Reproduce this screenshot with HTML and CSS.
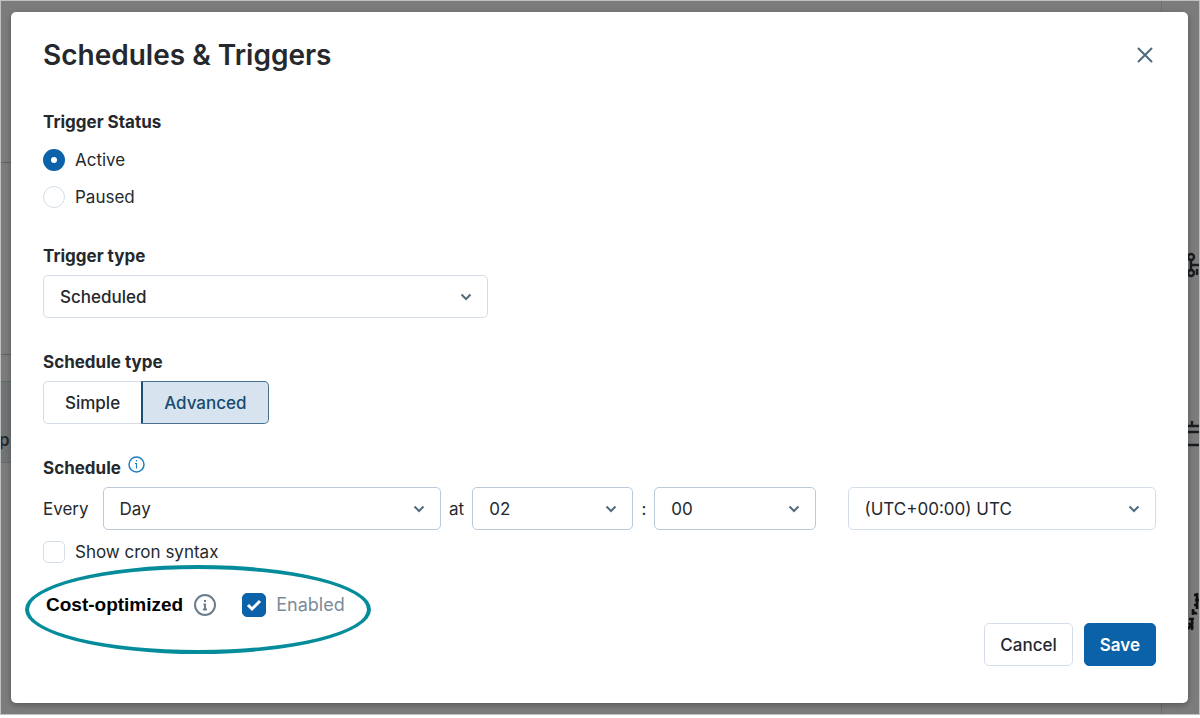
FILE: index.html
```html
<!DOCTYPE html>
<html lang="en">
<head>
<meta charset="utf-8">
<meta name="viewport" content="width=device-width, initial-scale=1">
<title>Schedules &amp; Triggers</title>
<link rel="stylesheet" href="styles.css">
</head>
<body>
<div class="backdrop">
  <div class="page-lines" aria-hidden="true">
    <span class="line line-top"></span>
    <span class="line line-mid"></span>
    <span class="line line-band"></span>
    <span class="column column-top"></span>
    <span class="column column-bottom"></span>
    <span class="page-letter">p</span>
    <svg class="glyph glyph-branch" width="12" height="28" viewBox="0 0 12 28" fill="none" stroke="#161c20" stroke-width="2.400"><circle cx="4" cy="5" r="3"/><circle cx="4" cy="21" r="3"/><path d="M4 8v10M4 13h8M10 17v6"/></svg>
    <svg class="glyph glyph-bars" width="12" height="28" viewBox="0 0 12 28" fill="none" stroke="#161c20" stroke-width="2.400"><path d="M1 6h11M1 12h11M1 25h11M5 1v5"/></svg>
    <svg class="glyph glyph-marks" width="12" height="40" viewBox="0 0 12 40" fill="none" stroke="#111" stroke-width="2.600"><path d="M10 1v16M7 3h4M8 8h4M7 13h4M5 19l5 3M6 17v6M2 27h5M2 31l4 5M6 30l-5 7M5 27v11"/></svg>
  </div>

  <form class="dialog" role="dialog" aria-labelledby="dialog-title">
    <header class="dialog-header">
      <h1 class="dialog-title" id="dialog-title">Schedules &amp; Triggers</h1>
      <button class="close" type="button" aria-label="Close">
        <svg width="18" height="18" viewBox="0 0 18 18" fill="none" stroke="#4f697a" stroke-width="2" stroke-linecap="round"><path d="M2.500 2.500l13 13M15.500 2.500l-13 13"/></svg>
      </button>
    </header>

    <fieldset class="section status">
      <legend class="label">Trigger Status</legend>
      <label class="choice"><input class="radio" type="radio" name="status" checked>Active</label>
      <label class="choice"><input class="radio" type="radio" name="status">Paused</label>
    </fieldset>

    <div class="section">
      <label class="label" for="trigger-type">Trigger type</label>
      <div class="select select-type">
        <select id="trigger-type"><option>Scheduled</option></select>
        <svg class="chevron" width="12" height="8" viewBox="0 0 12 8"><path d="M1.500 1.500l4.500 4.500 4.500-4.500"/></svg>
      </div>
    </div>

    <div class="section">
      <span class="label" id="schedule-type">Schedule type</span>
      <div class="segmented" role="group" aria-labelledby="schedule-type">
        <button class="segment" type="button" aria-pressed="false">Simple</button>
        <button class="segment segment-on" type="button" aria-pressed="true">Advanced</button>
      </div>
    </div>

    <div class="section">
      <div class="label label-info">Schedule
        <svg width="17" height="17" viewBox="0 0 17 17" fill="none" stroke="#2080c4" stroke-width="1.500"><circle cx="8.500" cy="8.500" r="7.500"/><path d="M7 7.500h1.500v5M8.500 4v1.500" stroke-width="1.200"/></svg>
      </div>
      <div class="schedule">
        <label class="every" for="every">Every</label>
        <div class="select select-strong">
          <select id="every"><option>Day</option></select>
          <svg class="chevron" width="12" height="8" viewBox="0 0 12 8"><path d="M1.500 1.500l4.500 4.500 4.500-4.500"/></svg>
        </div>
        <label for="hour">at</label>
        <div class="select select-strong">
          <select id="hour"><option>02</option></select>
          <svg class="chevron" width="12" height="8" viewBox="0 0 12 8"><path d="M1.500 1.500l4.500 4.500 4.500-4.500"/></svg>
        </div>
        <label for="minute">:</label>
        <div class="select select-strong">
          <select id="minute"><option>00</option></select>
          <svg class="chevron" width="12" height="8" viewBox="0 0 12 8"><path d="M1.500 1.500l4.500 4.500 4.500-4.500"/></svg>
        </div>
        <div class="select select-zone">
          <select aria-label="Time zone"><option>(UTC+00:00) UTC</option></select>
          <svg class="chevron" width="12" height="8" viewBox="0 0 12 8"><path d="M1.500 1.500l4.500 4.500 4.500-4.500"/></svg>
        </div>
      </div>
      <label class="choice choice-cron"><span class="tick"><input class="checkbox" type="checkbox"></span>Show cron syntax</label>
    </div>

    <div class="cost">
      <span class="cost-label" id="cost-label">Cost-optimized</span>
      <svg class="cost-info" width="24" height="24" viewBox="0 0 24 24" fill="none" stroke="#6b7e8c" stroke-width="2"><circle cx="12" cy="12" r="10"/><path d="M12 7v2M10.500 11.500H12V17M10 16.500h4"/></svg>
      <label class="choice choice-cost">
        <span class="tick">
          <input class="checkbox" type="checkbox" checked aria-describedby="cost-label">
          <svg class="check" width="16" height="14" viewBox="0 0 16 14" fill="none" stroke="#fff" stroke-width="3"><path d="M2 7l4 4 8-8"/></svg>
        </span>Enabled</label>
      <span class="ring" aria-hidden="true"></span>
    </div>

    <footer class="actions">
      <button class="button" type="button">Cancel</button>
      <button class="button button-primary" type="submit">Save</button>
    </footer>
  </form>
</div>
</body>
</html>
```
FILE: styles.css
```css
*,
*::before,
*::after {
  box-sizing: border-box;
}

body {
  margin: 0;
  background: #fff;
  color: #25292d;
  font: 400 17px/24px Inter, "Liberation Sans", sans-serif;
}

.backdrop {
  position: relative;
  overflow: hidden;
  margin-bottom: 3px;
  padding: 11px 11px 11px 10px;
  border: 1px solid #bfc1c1;
  background: #7c7c7c;
}

/* Parts of the page behind the dialog */
.line,
.column,
.page-letter,
.glyph {
  position: absolute;
}

.line {
  left: 0;
  width: 12px;
  height: 1px;
  background: #59646b;
}

.line-top { top: 161px; }
.line-mid { top: 353px; }

.line-band {
  top: 380px;
  height: 82px;
  background: #707474;
  border: solid #636c71;
  border-width: 1px 0;
}

.column {
  right: 37px;
  width: 1px;
  height: 12px;
  background: #687073;
}

.column-top { top: 0; }
.column-bottom { bottom: 0; }

.page-letter {
  top: 427px;
  left: -2px;
  color: #24292c;
  font-weight: 600;
}

.glyph { right: 0; }
.glyph-branch { top: 251px; }
.glyph-bars { top: 419px; }
.glyph-marks { top: 591px; }

.dialog {
  position: relative;
  padding: 26px 32px 37px;
  border-radius: 5px;
  background: #fff;
  box-shadow: 0 2px 6px rgba(0, 0, 0, 0.3);
}

.dialog-header {
  display: flex;
  align-items: center;
  justify-content: space-between;
  margin-bottom: 38px;
}

.dialog-title {
  margin: 0;
  font-size: 28px;
  font-weight: 600;
  line-height: 34px;
}

.close {
  display: flex;
  padding: 2px;
  border: 0;
  background: none;
}

.section {
  margin: 0 0 32px;
  padding: 0;
  border: 0;
}

.label {
  display: block;
  margin-bottom: 7px;
  padding: 0;
  font-weight: 700;
}

.status {
  margin-bottom: 35px;
}

.status .label {
  margin-bottom: 14px;
}

.label-info {
  display: flex;
  gap: 7px;
}

.choice {
  display: flex;
  align-items: center;
  gap: 10px;
}

.choice + .choice {
  margin-top: 13px;
}

.radio,
.checkbox {
  appearance: none;
  width: 22px;
  height: 22px;
  margin: 0;
  border: 1px solid #d5dde6;
  background: #fff;
}

.radio {
  border-radius: 50%;
}

.radio:checked {
  border: 8px solid #0b62a9;
}

.checkbox {
  border-radius: 5px;
}

.checkbox:checked {
  width: 24px;
  height: 24px;
  border-color: #0b62a9;
  background: #0b62a9;
}

.tick,
.select {
  display: grid;
  align-items: center;
}

.tick > *,
.select > * {
  grid-area: 1 / 1;
}

.check {
  justify-self: center;
}

.select select {
  appearance: none;
  width: 100%;
  height: 43px;
  padding: 0 32px 0 16px;
  border: 1px solid #d5dde8;
  border-radius: 5px;
  background: #fff;
  color: inherit;
  font: inherit;
}

.select-type select {
  font-weight: 500;
}

.select-strong select {
  border-color: #b9cbdb;
}

.chevron {
  justify-self: end;
  margin-right: 16px;
  fill: none;
  stroke: #526b7d;
  stroke-width: 2;
  pointer-events: none;
}

.select-type {
  width: 40%;
}

.segmented {
  display: flex;
}

.segment {
  height: 43px;
  padding: 0 21px;
  border: 1px solid #d5dde8;
  border-right: 0;
  border-radius: 5px 0 0 5px;
  background: #fff;
  color: inherit;
  font: inherit;
  font-weight: 500;
}

.segment-on {
  border: 1px solid #49718f;
  border-left: 2px solid #174f77;
  border-radius: 0 5px 5px 0;
  background: #d7e4ef;
  color: #174b70;
}

.schedule {
  display: grid;
  grid-template-columns: auto 338fr auto 161fr auto 161fr 332fr;
  align-items: center;
  column-gap: 8px;
}

.every {
  margin-right: 6px;
}

.select-zone {
  margin-left: 24px;
}

.choice-cron {
  margin-top: 10px;
}

.cost {
  position: relative;
  display: flex;
  align-items: center;
  margin-top: -3px;
  padding-left: 3px;
}

.cost-label {
  color: #000;
  font-family: "Liberation Sans", Arial, sans-serif;
  font-size: 19px;
  font-weight: 700;
}

.cost-info {
  margin: 0 25px 0 10px;
}

.choice-cost {
  color: #7c8b99;
  font-size: 18px;
}

/* Callout drawn around the cost row */
.ring {
  position: absolute;
  top: -28px;
  left: -18px;
  width: 346px;
  height: 89px;
  border: 4px solid #058c9b;
  border-radius: 50%;
  pointer-events: none;
}

.actions {
  display: flex;
  justify-content: flex-end;
  gap: 11px;
  margin-top: 6px;
}

.button {
  height: 43px;
  padding: 0 15px;
  border: 1px solid #d5dde8;
  border-radius: 5px;
  background: #fff;
  color: inherit;
  font: inherit;
  font-weight: 500;
}

.button-primary {
  border-color: #0b62a9;
  background: #0b62a9;
  color: #fff;
  font-weight: 600;
}
```
